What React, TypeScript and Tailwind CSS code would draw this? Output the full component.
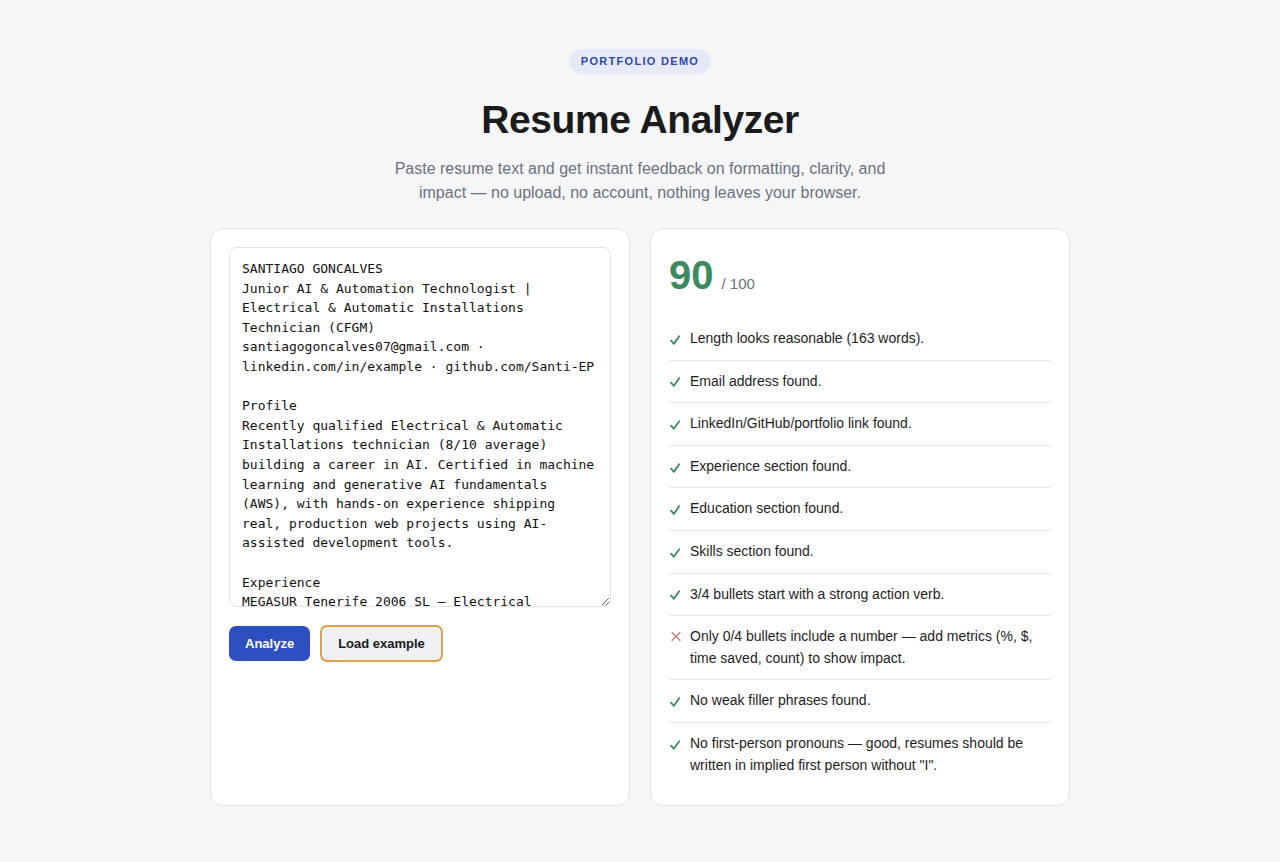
import { useState } from "react";

const SAMPLE = `SANTIAGO GONCALVES
Junior AI & Automation Technologist | Electrical & Automatic Installations Technician (CFGM)
santiagogoncalves07@gmail.com · linkedin.com/in/example · github.com/Santi-EP

Profile
Recently qualified Electrical & Automatic Installations technician (8/10 average) building a career in AI. Certified in machine learning and generative AI fundamentals (AWS), with hands-on experience shipping real, production web projects using AI-assisted development tools.

Experience
MEGASUR Tenerife 2006 SL — Electrical Installations Technician (Internship)
- Installed and tested low-voltage electrical panels for residential clients.
- Assisted senior technicians with fault diagnosis.`;

const checks = [
  { ok: true, text: "Length looks reasonable (163 words)." },
  { ok: true, text: "Email address found." },
  { ok: true, text: "LinkedIn/GitHub/portfolio link found." },
  { ok: true, text: "Experience section found." },
  { ok: true, text: "Education section found." },
  { ok: true, text: "Skills section found." },
  { ok: true, text: "3/4 bullets start with a strong action verb." },
  {
    ok: false,
    text: "Only 0/4 bullets include a number — add metrics (%, $, time saved, count) to show impact.",
  },
  { ok: true, text: "No weak filler phrases found." },
  {
    ok: true,
    text: 'No first-person pronouns — good, resumes should be written in implied first person without "I".',
  },
];

function Mark({ ok }: { ok: boolean }) {
  return (
    <span className="w-[12px] h-[21.6px] shrink-0 flex items-center">
      {ok ? (
        <svg width="10" height="10" viewBox="0 0 10 10" className="ml-px mt-[2px]">
          <path
            d="M1 5.6 L3.9 8.8 L9.2 1.2"
            fill="none"
            stroke="#3c8a5e"
            strokeWidth="1.8"
            strokeLinecap="round"
            strokeLinejoin="round"
          />
        </svg>
      ) : (
        <svg width="11" height="11" viewBox="0 0 11 11" className="ml-[2px]">
          <path
            d="M1 1 L10 10 M10 1 L1 10"
            fill="none"
            stroke="#d9625c"
            strokeWidth="1.3"
            strokeLinecap="round"
          />
        </svg>
      )}
    </span>
  );
}

export default function App() {
  const [text, setText] = useState(SAMPLE);

  return (
    <div className="min-h-screen bg-[#f5f6f8] font-['Liberation_Sans',Arial,sans-serif] text-[#1a1a1a]">
      <div className="max-w-[860px] mx-auto pt-[49px] pb-14">
        <header className="flex flex-col items-center text-center">
          <span className="rounded-full bg-[#e6eaf8] px-3 h-[25px] flex items-center text-[11px] font-bold tracking-[1.3px] text-[#2c47b0]">
            PORTFOLIO DEMO
          </span>
          <h1 className="mt-[22px] text-[39px] font-bold leading-[48px] tracking-[-0.4px] text-[#1b1b1b]">
            Resume Analyzer
          </h1>
          <p className="mt-[13px] max-w-[500px] text-[16px] leading-[24px] text-[#6b7280]">
            Paste resume text and get instant feedback on formatting, clarity,
            and impact — no upload, no account, nothing leaves your browser.
          </p>
        </header>

        <div className="mt-[23px] grid grid-cols-2 gap-[20px]">
          <section className="bg-white border border-[#e4e6ea] rounded-[14px] p-[18px]">
            <textarea
              value={text}
              onChange={(e) => setText(e.target.value)}
              spellCheck={false}
              className="block w-full h-[360px] resize-y rounded-[8px] border border-[#e2e4e8] px-[12px] pt-[11px] pb-[9px] font-['DejaVu_Sans_Mono',Menlo,monospace] text-[13px] leading-[19.6px] text-[#111] outline-none"
            />
            <div className="mt-[19px] flex gap-[10px]">
              <button className="h-[35px] px-[16px] rounded-[7px] bg-[#2d4fbf] text-white text-[13px] font-bold">
                Analyze
              </button>
              <button className="h-[37px] -mt-px px-[16px] rounded-[7px] bg-[#eef0f4] border-2 border-[#dba04a] text-[#1a1a1a] text-[13px] font-bold">
                Load example
              </button>
            </div>
          </section>

          <section className="bg-white border border-[#e4e6ea] rounded-[14px] px-[18px] pt-[22px] pb-[19px]">
            <div className="flex items-baseline gap-[8px]">
              <span className="text-[40px] leading-[48px] font-bold text-[#3c8a5e]">
                90
              </span>
              <span className="text-[15px] text-[#6b7280]">/ 100</span>
            </div>
            <ul className="mt-[19px]">
              {checks.map((c, i) => (
                <li
                  key={i}
                  className={`flex gap-[9px] py-[10px] text-[14px] leading-[21.6px] ${
                    i < checks.length - 1 ? "border-b border-[#e6e7ea]" : ""
                  }`}
                >
                  <Mark ok={c.ok} />
                  <span className="text-[#1d1d1d]">{c.text}</span>
                </li>
              ))}
            </ul>
          </section>
        </div>
      </div>
    </div>
  );
}
